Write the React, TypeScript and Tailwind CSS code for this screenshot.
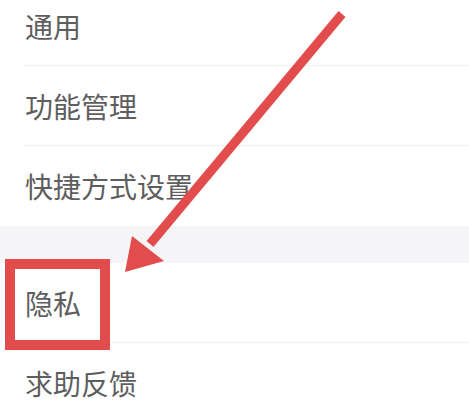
const rows = ["通用", "功能管理", "快捷方式设置"];
const rows2 = ["隐私", "求助反馈"];

function Row({ label, last }: { label: string; last?: boolean }) {
  return (
    <div className="pl-[25px]">
      <div
        className={
          "flex h-[80px] items-center text-[28px] text-[#5e5e5e] " +
          (last ? "" : "border-b border-[#f0f0f0]")
        }
      >
        {label}
      </div>
    </div>
  );
}

export default function App() {
  return (
    <main
      className="relative h-[410px] w-[469px] overflow-hidden bg-white"
      style={{ fontFamily: '"Noto Sans CJK SC", "Noto Sans", sans-serif' }}
    >
      <div className="-mt-[14px]">
        {rows.map((r, i) => (
          <Row key={r} label={r} last={i === rows.length - 1} />
        ))}
        <div className="h-[37px] bg-[#f5f5f7]" />
        {rows2.map((r) => (
          <Row key={r} label={r} />
        ))}
      </div>

      {/* highlight box */}
      <div className="absolute left-[5px] top-[259px] h-[91px] w-[105px] border-[10px] border-[#e24c4c]" />

      {/* arrow */}
      <svg className="absolute left-0 top-0" width="469" height="410" viewBox="0 0 469 410">
        <line x1="342" y1="14" x2="150" y2="244" stroke="#e24c4c" strokeWidth="9" />
        <polygon points="125,272 132,236 164,261" fill="#e24c4c" />
      </svg>
    </main>
  );
}
